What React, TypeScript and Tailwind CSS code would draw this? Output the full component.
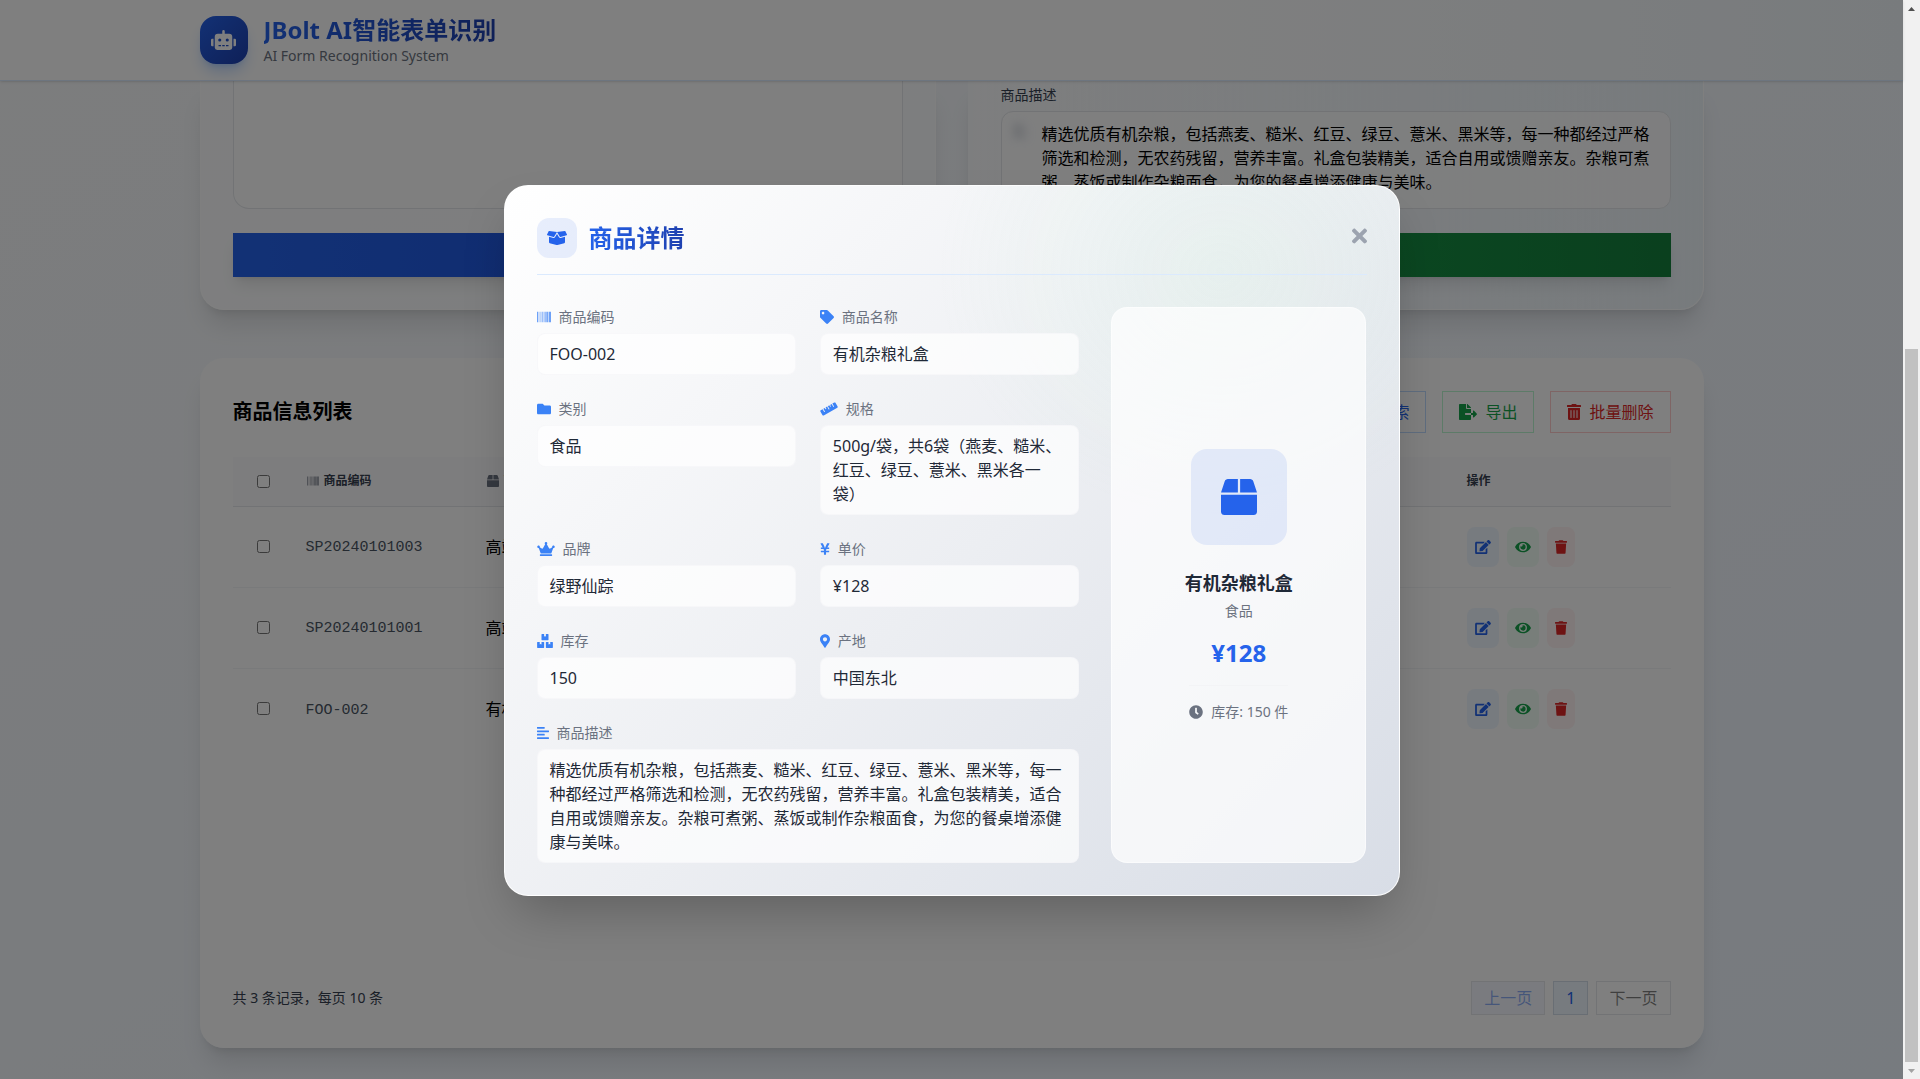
import type { ReactNode } from "react";
import type { IconType } from "react-icons";
import {
	FaAlignLeft,
	FaBarcode,
	FaBox,
	FaBoxes,
	FaBoxOpen,
	FaClock,
	FaCrown,
	FaEdit,
	FaEye,
	FaFileExport,
	FaFolder,
	FaMapMarkerAlt,
	FaRobot,
	FaRuler,
	FaSearch,
	FaTag,
	FaTimes,
	FaTrash,
	FaTrashAlt,
	FaYenSign,
} from "react-icons/fa";

const description =
	"精选优质有机杂粮，包括燕麦、糙米、红豆、绿豆、薏米、黑米等，每一种都经过严格筛选和检测，无农药残留，营养丰富。礼盒包装精美，适合自用或馈赠亲友。杂粮可煮粥、蒸饭或制作杂粮面食，为您的餐桌增添健康与美味。";

const products = [
	{ code: "SP20240101003", name: "高端茶" },
	{ code: "SP20240101001", name: "高端茶" },
	{ code: "FOO-002", name: "有机粮" },
];

type Field = {
	icon: IconType;
	iconWidth: string;
	label: string;
	value: string;
	wide?: boolean;
};

const fields: Field[] = [
	{
		icon: FaBarcode,
		iconWidth: "w-3.5",
		label: "商品编码",
		value: "FOO-002",
	},
	{
		icon: FaTag,
		iconWidth: "w-3.5",
		label: "商品名称",
		value: "有机杂粮礼盒",
	},
	{ icon: FaFolder, iconWidth: "w-3.5", label: "类别", value: "食品" },
	{
		icon: FaRuler,
		iconWidth: "w-[18px]",
		label: "规格",
		value: "500g/袋，共6袋（燕麦、糙米、红豆、绿豆、薏米、黑米各一袋）",
	},
	{ icon: FaCrown, iconWidth: "w-[18px]", label: "品牌", value: "绿野仙踪" },
	{ icon: FaYenSign, iconWidth: "w-[10px]", label: "单价", value: "¥128" },
	{ icon: FaBoxes, iconWidth: "w-4", label: "库存", value: "150" },
	{
		icon: FaMapMarkerAlt,
		iconWidth: "w-[10px]",
		label: "产地",
		value: "中国东北",
	},
	{
		icon: FaAlignLeft,
		iconWidth: "w-3",
		label: "商品描述",
		value: description,
		wide: true,
	},
];

function Header() {
	return (
		<header className="relative z-10 shrink-0 border-b border-[#dbeafe] bg-linear-to-r from-white from-60% to-[#f1f7fb] shadow-sm">
			<div className="mx-auto flex h-20 max-w-[1536px] items-center gap-4 px-4">
				<div className="flex size-12 items-center justify-center rounded-2xl bg-linear-to-br from-[#2563eb] to-[#1e40af] text-white shadow-lg shadow-blue-500/30">
					<FaRobot className="h-5 w-[25px]" />
				</div>
				<div>
					<h1 className="w-fit bg-linear-to-r from-[#2563eb] to-[#1e40af] bg-clip-text text-2xl leading-8 font-bold text-transparent">
						JBolt AI智能表单识别
					</h1>
					<p className="text-sm leading-5 text-[#6b7280]">
						AI Form Recognition System
					</p>
				</div>
			</div>
		</header>
	);
}

function UploadPanel() {
	return (
		<section className="flex flex-col justify-end rounded-b-3xl border border-t-0 border-white/80 bg-white/60 px-8 pb-8 shadow-xl">
			<textarea
				aria-label="识别内容"
				className="mb-6 block w-full flex-1 resize-none rounded-b-2xl border border-t-0 border-gray-200 bg-white/70"
			/>
			<button
				type="button"
				className="h-11 w-full bg-linear-to-r from-[#2563eb] to-[#1d4ed8] text-white shadow-lg"
			>
				识别
			</button>
		</section>
	);
}

function ResultPanel() {
	return (
		<section className="rounded-b-3xl border border-t-0 border-white/80 bg-linear-to-r from-white/60 to-[#eff6fb] px-8 pt-1 pb-8 shadow-xl">
			<label
				htmlFor="description"
				className="mb-1.5 block text-sm leading-5 text-[#374151]"
			>
				商品描述
			</label>
			<div className="relative mb-6">
				<textarea
					id="description"
					rows={3}
					defaultValue={description}
					className="block h-[98px] w-full resize-none overflow-hidden rounded-xl border border-gray-200 bg-white/80 py-2.5 pr-4 pl-10 leading-6 text-black"
				/>
				<FaAlignLeft className="absolute top-3 left-3 h-4 w-3.5 text-gray-400/60 blur-xs" />
			</div>
			<button
				type="button"
				className="h-11 w-full bg-linear-to-r from-[#16a34a] to-[#15803d] text-white shadow-lg"
			>
				保存信息
			</button>
		</section>
	);
}

type ToolButtonProps = {
	icon: IconType;
	iconWidth: string;
	className: string;
	children: ReactNode;
};

function ToolButton({
	icon: Icon,
	iconWidth,
	className,
	children,
}: ToolButtonProps) {
	return (
		<button
			type="button"
			className={`flex items-center gap-2 border px-4 py-2 leading-6 ${className}`}
		>
			<Icon className={`h-4 ${iconWidth}`} />
			{children}
		</button>
	);
}

function ProductTable() {
	return (
		<div className="min-h-[469px] bg-white/40">
			<table className="w-full table-fixed text-left">
				<colgroup>
					<col className="w-[61px]" />
					<col className="w-[180px]" />
					<col />
					<col className="w-[216px]" />
				</colgroup>
				<thead>
					<tr className="h-[49px] border-b border-gray-200 bg-[#fbfbfc] text-xs text-[#374151]">
						<th className="pl-6">
							<input
								type="checkbox"
								aria-label="全选"
								className="block size-[13px]"
							/>
						</th>
						<th className="px-3 font-semibold">
							<span className="flex items-center gap-1">
								<FaBarcode className="h-3 w-3.5 text-[#6b7280]" />
								商品编码
							</span>
						</th>
						<th className="px-3 font-semibold">
							<span className="flex items-center gap-1">
								<FaBox className="h-3 w-3.5 text-[#6b7280]" />
								商品
							</span>
						</th>
						<th className="px-3 font-semibold">操作</th>
					</tr>
				</thead>
				<tbody>
					{products.map((product) => (
						<tr
							key={product.code}
							className="h-[81px] border-b border-gray-100 last:border-b-0"
						>
							<td className="pl-6">
								<input
									type="checkbox"
									aria-label={product.code}
									className="block size-[13px]"
								/>
							</td>
							<td className="px-3 pt-1 font-['Liberation_Mono',monospace] text-[15px] text-[#4b5563]">
								{product.code}
							</td>
							<td className="px-3 text-black">{product.name}</td>
							<td className="px-3">
								<div className="flex gap-2">
									<button
										type="button"
										aria-label="编辑"
										className="flex h-10 items-center rounded-lg bg-[#eff6ff] px-2 text-[#2563eb]"
									>
										<FaEdit className="h-3.5 w-4" />
									</button>
									<button
										type="button"
										aria-label="查看"
										className="flex h-10 items-center rounded-lg bg-[#f0fdf4] px-2 text-[#16a34a]"
									>
										<FaEye className="h-3.5 w-4" />
									</button>
									<button
										type="button"
										aria-label="删除"
										className="flex h-10 items-center rounded-lg bg-[#fef2f2] px-2 text-[#dc2626]"
									>
										<FaTrash className="h-3.5 w-3" />
									</button>
								</div>
							</td>
						</tr>
					))}
				</tbody>
			</table>
		</div>
	);
}

function ProductList() {
	return (
		<section className="mt-12 rounded-3xl border border-white/80 bg-white/90 p-8 shadow-xl">
			<div className="flex items-center justify-between">
				<h2 className="text-xl font-bold text-black">商品信息列表</h2>
				<div className="flex gap-4">
					<ToolButton
						icon={FaSearch}
						iconWidth="w-4"
						className="border-[#bfdbfe] text-[#2563eb]"
					>
						搜索
					</ToolButton>
					<ToolButton
						icon={FaFileExport}
						iconWidth="w-[18px]"
						className="border-[#bbf7d0] text-[#16a34a]"
					>
						导出
					</ToolButton>
					<ToolButton
						icon={FaTrashAlt}
						iconWidth="w-3.5"
						className="border-[#fecaca] text-[#dc2626]"
					>
						批量删除
					</ToolButton>
				</div>
			</div>
			<div className="mt-6 mb-[55px]">
				<ProductTable />
			</div>
			<div className="flex items-center justify-between">
				<p className="text-sm text-[#374151]">共 3 条记录，每页 10 条</p>
				<nav className="flex gap-2 leading-6">
					<button
						type="button"
						disabled
						className="border border-gray-200 bg-indigo-50/60 px-3 py-1 text-[#2563eb]/50"
					>
						上一页
					</button>
					<button
						type="button"
						className="border border-[#d3dce8] bg-[#eff6ff] px-3 py-1 text-[#2563eb]"
					>
						1
					</button>
					<button
						type="button"
						disabled
						className="border border-gray-200 px-3 py-1 text-black/50"
					>
						下一页
					</button>
				</nav>
			</div>
		</section>
	);
}

function DetailField({ icon: Icon, iconWidth, label, value, wide }: Field) {
	return (
		<div className={wide ? "col-span-2" : ""}>
			<dt className="mb-1.5 flex items-center gap-2 text-sm leading-5 text-[#6b7280]">
				<Icon className={`h-3.5 text-[#3b82f6] ${iconWidth}`} />
				{label}
			</dt>
			<dd className="rounded-lg border border-gray-100/60 bg-white/70 px-3 py-2 leading-6 text-[#1f2937]">
				{value}
			</dd>
		</div>
	);
}

function DetailDialog() {
	return (
		<div
			role="dialog"
			aria-labelledby="detail-title"
			className="w-full max-w-4xl rounded-3xl border border-white/90 bg-[radial-gradient(ellipse_at_80%_12%,rgba(187,247,208,0.12),transparent_28%),linear-gradient(135deg,#ffffff,#eceef2_52%,#d8dde6)] p-8 shadow-2xl"
		>
			<div className="flex items-center gap-3 border-b border-[#dbeafe] pb-4">
				<div className="flex size-10 items-center justify-center rounded-xl bg-[#2563eb]/10 text-[#2563eb]">
					<FaBoxOpen className="h-4 w-5" />
				</div>
				<h3
					id="detail-title"
					className="bg-linear-to-r from-[#2563eb] to-[#1e40af] bg-clip-text text-2xl font-bold text-transparent"
				>
					商品详情
				</h3>
				<button
					type="button"
					aria-label="关闭"
					className="mb-1 ml-auto text-[#9ca3af]"
				>
					<FaTimes className="h-[22px] w-[15px]" />
				</button>
			</div>

			<div className="mt-8 grid grid-cols-3 gap-8">
				<dl className="col-span-2 grid grid-cols-2 gap-6">
					{fields.map((field) => (
						<DetailField key={field.label} {...field} />
					))}
				</dl>

				<aside className="flex flex-col items-center justify-center rounded-2xl border border-white/50 bg-white/70">
					<div className="mb-6 flex size-24 items-center justify-center rounded-2xl bg-[#2563eb]/10 text-[#2563eb]">
						<FaBox className="size-9" />
					</div>
					<h4 className="text-lg leading-7 font-bold text-[#1f2937]">
						有机杂粮礼盒
					</h4>
					<p className="mt-1 text-sm leading-5 text-[#6b7280]">食品</p>
					<p className="mt-4 text-2xl leading-8 font-bold text-[#2563eb]">
						¥128
					</p>
					<p className="mt-4 flex items-center gap-2 border-t border-gray-100 pt-4 text-sm leading-5 text-[#6b7280]">
						<FaClock className="size-3.5" />
						库存: 150 件
					</p>
				</aside>
			</div>
		</div>
	);
}

function ScrollRail() {
	return (
		<div className="flex w-[17px] shrink-0 flex-col items-center bg-[#f1f1f1]">
			<svg viewBox="0 0 17 17" className="size-[17px] shrink-0">
				<path d="M8.5 7 12 11H5z" fill="#505050" />
			</svg>
			<div className="h-[332px] shrink-0" />
			<div className="w-[13px] flex-1 bg-[#c1c1c1]" />
			<svg viewBox="0 0 17 17" className="size-[17px] shrink-0">
				<path d="M8.5 11 5 7h7z" fill="#a3a3a3" />
			</svg>
		</div>
	);
}

export default function App() {
	return (
		<div className="flex h-screen overflow-hidden font-['Noto_Sans','Noto_Sans_CJK_SC',sans-serif] text-base [text-spacing-trim:space-all]">
			<div className="relative flex flex-1 flex-col bg-linear-to-br from-gray-50 to-blue-50">
				<Header />
				<main className="mx-auto w-full max-w-[1536px] px-4">
					<div className="grid grid-cols-2 gap-8">
						<UploadPanel />
						<ResultPanel />
					</div>
					<ProductList />
				</main>

				<div className="absolute inset-0 z-20 flex items-center justify-center bg-black/50 pt-0.5">
					<DetailDialog />
				</div>
			</div>
			<ScrollRail />
		</div>
	);
}
